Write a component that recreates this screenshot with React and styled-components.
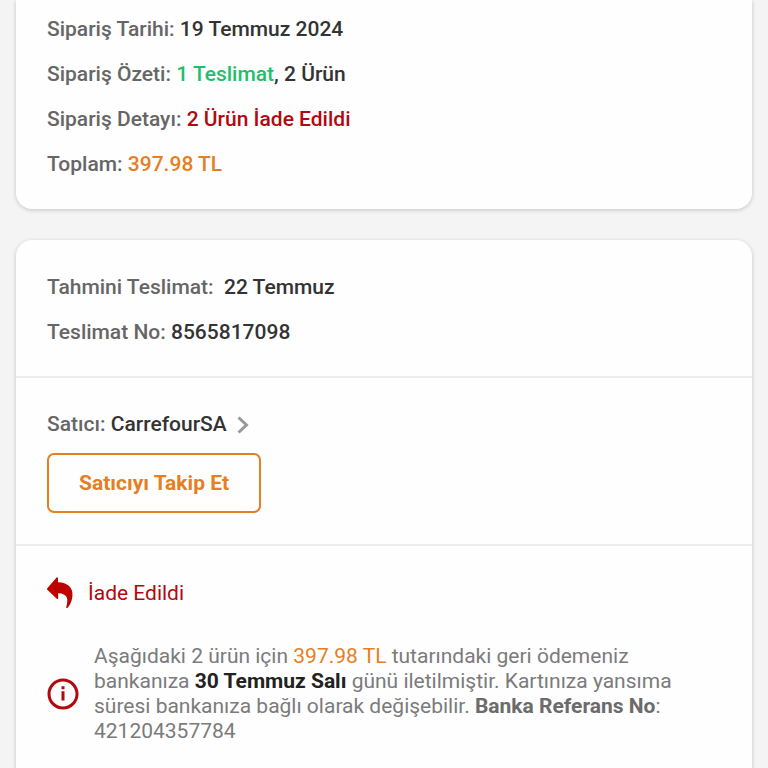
import styled, { createGlobalStyle } from 'styled-components';

const colors = {
  label: '#666666',
  dark: '#333333',
  green: '#1fbf6b',
  red: '#b00a10',
  orange: '#e67e22',
};

function App() {
  return (
    <>
      <GlobalStyles />
      <Page>
        <SummaryCard>
          <Row>
            Sipariş Tarihi: <Value>19 Temmuz 2024</Value>
          </Row>
          <Row>
            Sipariş Özeti: <Value $color="green">1 Teslimat</Value>
            <Value>, 2 Ürün</Value>
          </Row>
          <Row>
            Sipariş Detayı: <Value $color="red">2 Ürün İade Edildi</Value>
          </Row>
          <Row>
            Toplam: <Value $color="orange">397.98 TL</Value>
          </Row>
        </SummaryCard>

        <Card>
          <DeliverySection>
            <Row>
              Tahmini Teslimat:&nbsp; <Value>22 Temmuz</Value>
            </Row>
            <Row>
              Teslimat No: <Value>8565817098</Value>
            </Row>
          </DeliverySection>

          <SellerSection>
            <Row>
              Satıcı:{' '}
              <SellerLink href="#satici">
                CarrefourSA
                <Chevron viewBox="0 0 12 18" aria-hidden="true">
                  <path d="M1.500 1.500 9.500 9l-8 7.500" />
                </Chevron>
              </SellerLink>
            </Row>
            <FollowButton type="button">Satıcıyı Takip Et</FollowButton>
          </SellerSection>

          <ReturnSection>
            <Status>
              <ReturnIcon viewBox="0 0 26 32" aria-hidden="true">
                <path d="M.3 11.200 9.600.6c.6-.7 1.400-.3 1.400.5v4.200c5.200.1 9.500 1.600 12 4.800 2.900 3.700 3.100 8.700 1.500 13.600-.9 2.800-2.300 5.400-3.800 7-.8.800-1.700.4-1.400-.7.900-3.300 1.500-6.700.5-9.400-1.100-2.900-3.900-4.300-8.600-4.400v4.900c0 .9-.8 1.200-1.400.6L.3 12.700c-.4-.5-.4-1 0-1.500z" />
              </ReturnIcon>
              İade Edildi
            </Status>
            <Notice>
              <InfoIcon viewBox="0 0 32 32" aria-hidden="true">
                <circle cx="16" cy="16" r="14" />
                <path d="M16 13.300v9.200M16 8.300v3" />
              </InfoIcon>
              <NoticeText>
                Aşağıdaki 2 ürün için <Amount>397.98 TL</Amount> tutarındaki geri ödemeniz
                bankanıza <DateText>30 Temmuz Salı</DateText> günü iletilmiştir. Kartınıza yansıma
                süresi bankanıza bağlı olarak değişebilir. <Reference>Banka Referans No</Reference>:
                421204357784
              </NoticeText>
            </Notice>
          </ReturnSection>
        </Card>
      </Page>
    </>
  );
}

const GlobalStyles = createGlobalStyle`
  * {
    box-sizing: border-box;
  }

  body {
    margin: 0;
    background: #f4f4f4;
    font-family: Roboto, "Liberation Sans", sans-serif;
    font-size: 21px;
    line-height: 25px;
    color: #7b7b7b;
  }

  p {
    margin: 0;
  }
`;

const Page = styled.main`
  display: flex;
  flex-direction: column;
  gap: 31px;
  height: 100vh;
  padding: 0 16px;
  overflow: hidden;
`;

const Card = styled.section`
  flex: 1 0 auto;
  background: #fefefe;
  border-radius: 16px 16px 0 0;
  box-shadow: 0 1px 4px rgba(0, 0, 0, 0.2);
`;

const SummaryCard = styled(Card)`
  display: flex;
  flex: none;
  flex-direction: column;
  gap: 20px;
  padding: 17px 31px 32px;
  border-radius: 0 0 16px 16px;
`;

const Section = styled.div`
  display: flex;
  flex-direction: column;
  border-bottom: 2px solid #ececec;
`;

const DeliverySection = styled(Section)`
  gap: 20px;
  padding: 35px 31px 31px;
`;

const SellerSection = styled(Section)`
  gap: 16px;
  padding: 34px 31px 31px;
`;

const ReturnSection = styled(Section)`
  gap: 35px;
  padding: 31px;
  border-bottom: none;
`;

const Row = styled.p`
  font-weight: 500;
  color: ${colors.label};
`;

const Value = styled.span`
  color: ${({ $color = 'dark' }) => colors[$color]};
`;

const SellerLink = styled.a`
  display: inline-flex;
  align-items: center;
  gap: 10px;
  color: ${colors.dark};
  text-decoration: none;
`;

const Chevron = styled.svg`
  width: 12px;
  height: 18px;
  fill: none;
  stroke: #999999;
  stroke-width: 3;
`;

const FollowButton = styled.button`
  align-self: flex-start;
  padding: 16px 30px 15px;
  border: 2px solid ${colors.orange};
  border-radius: 7px;
  background: transparent;
  font: inherit;
  font-weight: 700;
  color: ${colors.orange};
  cursor: pointer;
`;

const Status = styled.p`
  display: flex;
  align-items: center;
  gap: 15px;
  color: ${colors.red};
`;

const ReturnIcon = styled.svg`
  width: 26px;
  height: 32px;
  fill: #bd0000;
`;

const Notice = styled.div`
  display: flex;
  align-items: center;
  gap: 15px;
`;

const InfoIcon = styled.svg`
  flex: none;
  width: 32px;
  height: 32px;
  fill: none;
  stroke: ${colors.red};
  stroke-width: 3;
`;

const NoticeText = styled.p`
  flex: 1;
  max-width: 600px;
`;

const Amount = styled.span`
  color: ${colors.orange};
`;

const DateText = styled.strong`
  color: #222222;
`;

const Reference = styled.strong`
  color: #6b6b6b;
`;

export default App;
